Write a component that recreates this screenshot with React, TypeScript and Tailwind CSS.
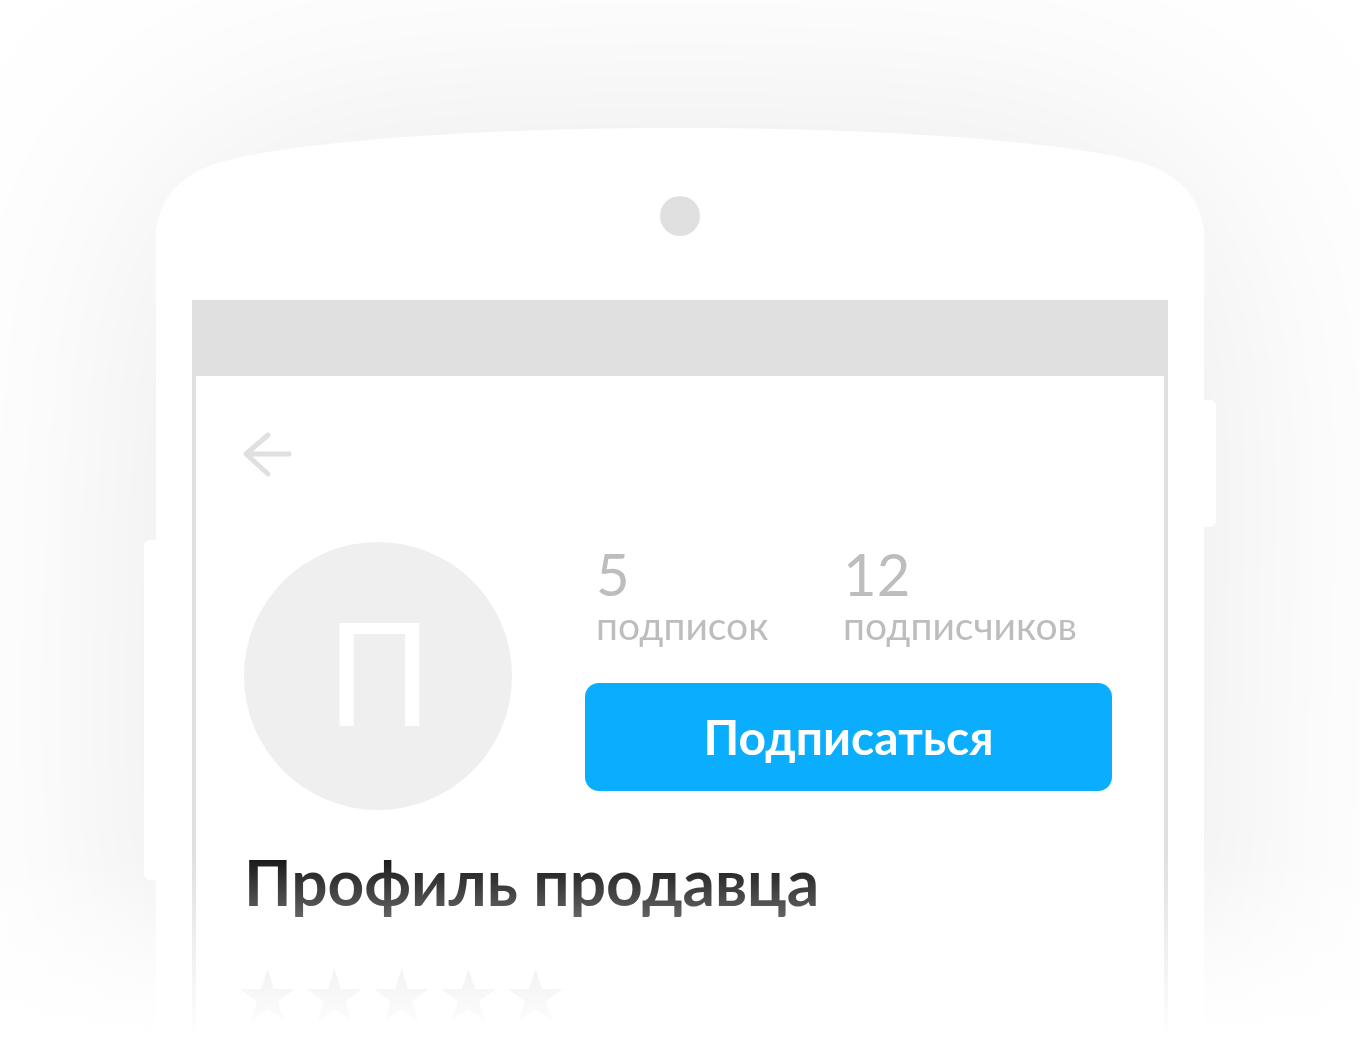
import React from "react";

function Star() {
  return (
    <svg width="55" height="53" viewBox="0 0 55 53" className="block">
      <path
        d="M27.5 0 L33.99 19.97 L55 19.97 L38 32.31 L44.49 52.28 L27.5 39.94 L10.51 52.28 L17 32.31 L0 19.97 L21.01 19.97 Z"
        fill="#e0e0e0"
      />
    </svg>
  );
}

export default function App() {
  return (
    <div className="relative w-[1360px] h-[1040px] overflow-hidden bg-white [font-family:Lato,'Noto_Sans',sans-serif]">
      <div className="flex items-start pt-[165px] pl-[144px] [filter:drop-shadow(0_0_130px_rgba(0,0,0,0.085))]">
        <div className="mt-[375px] w-[12px] h-[340px] bg-white rounded-l-[6px]" />
        <div className="relative w-[1048px] h-[900px] bg-white rounded-t-[72px]">
          <div className="absolute -top-[37px] left-[34px] w-[980px] h-[105px] rounded-[50%] bg-white" />
          <div className="relative flex flex-col h-full">
            <div className="mt-[31px] mx-auto w-[40px] h-[40px] rounded-full bg-[#e0e0e0]" />
            <div className="mt-[64px] mx-[36px] flex flex-col flex-1">
              <div className="h-[76px] bg-[#e0e0e0]" />
              <div className="flex-1 bg-white border-x-4 border-[#e0e0e0] pl-[48px] pr-[48px]">
                <svg width="52" height="48" viewBox="0 0 52 48" className="block mt-[54px] -ml-[2px]">
                  <path
                    d="M26 5 L4 24 L26 44 M4 24 H47"
                    fill="none"
                    stroke="#e0e0e0"
                    strokeWidth="5"
                    strokeLinecap="round"
                    strokeLinejoin="round"
                  />
                </svg>
                <div className="mt-[64px] flex items-start">
                  <div className="w-[268px] h-[268px] shrink-0 rounded-full bg-[#efefef] flex items-center justify-center">
                    <span className="text-[144px] leading-none text-white mb-[11px] ml-[3px]">П</span>
                  </div>
                  <div className="ml-[73px] flex flex-col">
                    <div className="ml-[11px] mt-[3px] flex text-[#bdbdbd]">
                      <div className="w-[247px] flex flex-col">
                        <span className="text-[58px] leading-none">5</span>
                        <span className="mt-[3px] text-[39px] leading-none">подписок</span>
                      </div>
                      <div className="flex flex-col">
                        <span className="text-[58px] leading-none">12</span>
                        <span className="mt-[3px] text-[39px] leading-none">подписчиков</span>
                      </div>
                    </div>
                    <div className="mt-[38px] w-[527px] h-[108px] rounded-[14px] bg-[#0aaefc] flex items-center justify-center">
                      <span className="text-[48px] leading-none font-bold text-white">Подписаться</span>
                    </div>
                  </div>
                </div>
                <div className="mt-[40px] text-[64px] leading-none font-bold text-[#141414]">
                  Профиль продавца
                </div>
                <div className="mt-[55px] -ml-[4px] flex gap-[12px]">
                  <Star />
                  <Star />
                  <Star />
                  <Star />
                  <Star />
                </div>
              </div>
            </div>
          </div>
        </div>
        <div className="mt-[235px] w-[12px] h-[127px] bg-white rounded-r-[6px]" />
      </div>
      <div className="pointer-events-none absolute inset-x-0 top-[855px] bottom-0 bg-linear-to-b from-white/0 to-white" />
    </div>
  );
}
